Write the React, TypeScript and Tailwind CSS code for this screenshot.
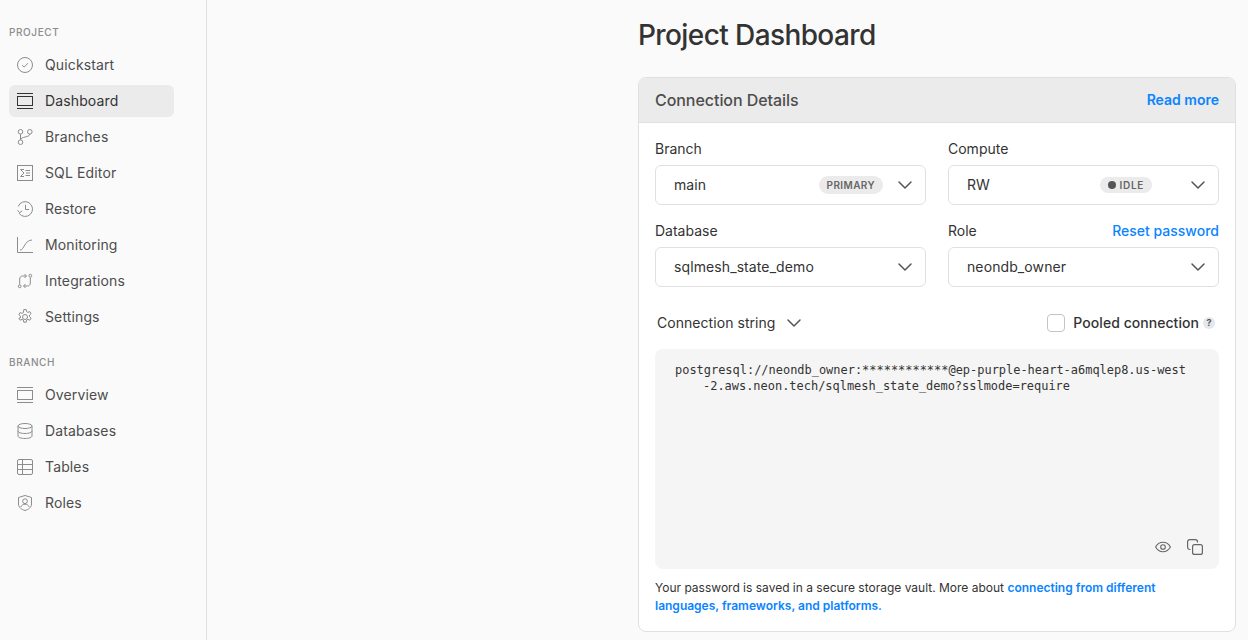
import type { ReactNode } from "react";
import { ChevronDown } from "lucide-react";

const ICON = "h-4 w-4";

function Svg({ children, className = "text-[#8c8c8c]" }: { children: ReactNode; className?: string }) {
  return (
    <svg viewBox="0 0 16 16" fill="none" stroke="currentColor" strokeWidth="1" className={`${ICON} ${className}`}>
      {children}
    </svg>
  );
}

const QuickstartIcon = () => (
  <Svg>
    <circle cx="8" cy="8" r="7.5" />
    <path d="M5.2 8.2 7.2 10.1 10.9 6.2" />
  </Svg>
);
const PanelIcon = ({ dark }: { dark?: boolean }) => (
  <Svg className={dark ? "text-[#333333]" : "text-[#8c8c8c]"}>
    <path d="M0 0.5h16M0 15.5h16" />
    <rect x="0.5" y="3.5" width="15" height="9" />
  </Svg>
);
const BranchIcon = () => (
  <Svg>
    <circle cx="3.5" cy="2.8" r="2.3" />
    <circle cx="12.8" cy="2.8" r="2.3" />
    <circle cx="3.5" cy="13.2" r="2.3" />
    <path d="M3.500 5.100v5.800M12.800 5.100c0 3.400-9.300 2.400-9.300 5.800" />
  </Svg>
);
const SqlIcon = () => (
  <Svg>
    <rect x="0.5" y="0.5" width="15" height="15" />
    <path d="M3.500 4.500 7 8l-3.500 3.500M3.500 4.500H7M3.500 11.500H7M8.500 5.500h4.500M9 8h4M8.500 10.500h4.500" />
  </Svg>
);
const RestoreIcon = () => (
  <Svg>
    <path d="M1.200 5.500A7.400 7.400 0 1 1 2 12.200" />
    <path d="M8.500 3.800V8.500h3.600" />
    <path d="M0.500 9.200 2.600 11.700 5.200 9.900" />
  </Svg>
);
const MonitoringIcon = () => (
  <Svg>
    <path d="M0.500 0v15.500H16" />
    <path d="M3 13c4.500 0 4-9.500 12-10" />
  </Svg>
);
const IntegrationsIcon = () => (
  <Svg>
    <circle cx="2.700" cy="13.300" r="1.400" />
    <circle cx="13.300" cy="2.700" r="1.400" />
    <path d="M2.700 11.500V6c0-2 1-3 3-3h3.500M7.500 1 9.500 3 7.500 5" />
    <path d="M13.300 4.500V10c0 2-1 3-3 3H6.800M8.500 11l-2 2 2 2" />
  </Svg>
);
const SettingsIcon = () => (
  <Svg>
    <circle cx="8" cy="8" r="2.500" />
    <path d="M6.800 0.600h2.400l.4 2.100 1.300.7 2-.8 1.200 2.100-1.600 1.400v1.600l1.600 1.400-1.200 2.100-2-.8-1.300.7-.4 2.100H6.800l-.4-2.100-1.300-.7-2 .8-1.200-2.100L3.500 8.700V7.100L1.900 5.700l1.200-2.100 2 .8 1.300-.7z" />
  </Svg>
);
const DatabaseIcon = () => (
  <Svg>
    <ellipse cx="8" cy="3" rx="7" ry="2.500" />
    <path d="M1 3v10c0 1.400 3.100 2.500 7 2.500s7-1.100 7-2.500V3M1 8c0 1.400 3.100 2.500 7 2.500S15 9.400 15 8" />
  </Svg>
);
const TablesIcon = () => (
  <Svg>
    <rect x="0.500" y="0.500" width="15" height="15" rx="1.500" />
    <path d="M0.500 5.500h15M0.500 10.500h15M5.500 0.500v15" />
  </Svg>
);
const RolesIcon = () => (
  <Svg>
    <path d="M8 0.500 14.500 2.500V9c0 3.500-3 5.500-6.500 6.500C4.500 14.500 1.500 12.500 1.500 9V2.500z" />
    <circle cx="8" cy="6.200" r="2.400" />
    <path d="M3.800 12c.8-2 2.400-2.800 4.200-2.800s3.400.8 4.200 2.800" />
  </Svg>
);

const PROJECT_ITEMS = [
  { label: "Quickstart", icon: <QuickstartIcon /> },
  { label: "Dashboard", icon: <PanelIcon dark />, active: true },
  { label: "Branches", icon: <BranchIcon /> },
  { label: "SQL Editor", icon: <SqlIcon /> },
  { label: "Restore", icon: <RestoreIcon /> },
  { label: "Monitoring", icon: <MonitoringIcon /> },
  { label: "Integrations", icon: <IntegrationsIcon /> },
  { label: "Settings", icon: <SettingsIcon /> },
];

const BRANCH_ITEMS = [
  { label: "Overview", icon: <PanelIcon /> },
  { label: "Databases", icon: <DatabaseIcon /> },
  { label: "Tables", icon: <TablesIcon /> },
  { label: "Roles", icon: <RolesIcon /> },
];

function NavItem({ label, icon, active }: { label: string; icon: ReactNode; active?: boolean }) {
  return (
    <div
      className={`flex h-8 items-center gap-3 rounded-[6px] pl-2 text-sm font-normal tracking-[0.13px] ${
        active ? "bg-[#ebebeb] text-[#333333]" : "text-[#4d4d4d]"
      }`}
    >
      {icon}
      <span>{label}</span>
    </div>
  );
}

function Sidebar() {
  return (
    <aside className="flex h-[640px] w-[207px] shrink-0 flex-col border-r border-[#e0e0e0] pl-[9px] pr-8">
      <p className="mt-[26px] h-3 text-[10px] leading-3 font-medium tracking-[0.6px] text-[#8c8c8c]">PROJECT</p>
      <nav className="mt-[11px] flex flex-col gap-1">
        {PROJECT_ITEMS.map((item) => (
          <NavItem key={item.label} {...item} />
        ))}
      </nav>
      <p className="mt-[23px] h-3 text-[10px] leading-3 font-medium tracking-[0.6px] text-[#8c8c8c]">BRANCH</p>
      <nav className="mt-[11px] flex flex-col gap-1">
        {BRANCH_ITEMS.map((item) => (
          <NavItem key={item.label} {...item} />
        ))}
      </nav>
    </aside>
  );
}

function Select({ value, badge }: { value: string; badge?: ReactNode }) {
  return (
    <div className="mt-[7px] flex h-10 items-center rounded-[6px] border border-[#e0e0e0] bg-white pl-[18px] pr-2 text-sm text-[#333333]">
      <span className="flex-1 tracking-[0.1px]">{value}</span>
      {badge}
      <ChevronDown size={24} strokeWidth={1.5} className="ml-[10px] text-[#555555]" />
    </div>
  );
}

function Field({
  label,
  value,
  badge,
  action,
}: {
  label: string;
  value: string;
  badge?: ReactNode;
  action?: string;
}) {
  return (
    <div>
      <div className="flex h-[18px] items-center justify-between text-sm leading-[18px]">
        <span className="text-[#333333]">{label}</span>
        {action && <span className="font-medium text-[#0a84ff]">{action}</span>}
      </div>
      <Select value={value} badge={badge} />
    </div>
  );
}

function ConnectionCard() {
  return (
    <section className="h-[555px] w-[598px] overflow-hidden rounded-[8px] border border-[#e0e0e0] bg-white">
      <header className="flex h-[45px] items-center justify-between border-b border-[#e0e0e0] bg-[#ebebeb] px-4">
        <h2 className="text-base font-medium tracking-[-0.05px] text-[#4d4d4d]">Connection Details</h2>
        <a className="text-sm font-semibold text-[#0a84ff]">Read more</a>
      </header>
      <div className="px-4 pt-[17px]">
        <div className="grid grid-cols-2 gap-x-[22px] gap-y-[17px]">
          <Field
            label="Branch"
            value="main"
            badge={
              <span className="rounded-full bg-[#ebebeb] px-2 text-[10px] leading-[18px] font-semibold tracking-[0.4px] text-[#666666]">
                PRIMARY
              </span>
            }
          />
          <Field
            label="Compute"
            value="RW"
            badge={
              <span className="mr-6 flex h-4 items-center gap-1 rounded-full bg-[#ebebeb] px-2 text-[10px] font-semibold tracking-[0.7px] text-[#666666]">
                <span className="h-2 w-2 rounded-full bg-[#555555]" />
                IDLE
              </span>
            }
          />
          <Field label="Database" value="sqlmesh_state_demo" />
          <Field label="Role" value="neondb_owner" action="Reset password" />
        </div>
        <div className="mt-[16px] flex h-[40px] items-center justify-between">
          <div className="flex items-center gap-[7px] pl-[2px] text-sm tracking-[0.05px] text-[#333333]">
            <span>Connection string</span>
            <ChevronDown size={24} strokeWidth={1.5} className="text-[#555555]" />
          </div>
          <div className="flex items-center">
            <span className="h-[18px] w-[18px] rounded-[4px] border border-[#c4c4c4] bg-white" />
            <span className="ml-2 text-sm font-medium tracking-[0.05px] text-[#333333]">Pooled connection</span>
            <span className="mr-1 ml-1 flex h-3 w-3 items-center justify-center rounded-full bg-[#e4e7ed] text-[9px] font-bold text-[#555555]">
              ?
            </span>
          </div>
        </div>
        <div className="mt-[6px] flex h-[220px] flex-col justify-between rounded-[8px] bg-[#f5f5f5] px-5 pt-[13px] pb-[14px]">
          <p
            className="pl-[28px] -indent-[28px] text-[11.96px] leading-[16px] text-[#333333]"
            style={{ fontFamily: '"DejaVu Sans Mono", monospace' }}
          >
            postgresql://neondb_owner:************@ep-purple-heart-a6mqlep8.us-west
            <wbr />
            -2.aws.neon.tech/sqlmesh_state_demo?sslmode=require
          </p>
          <div className="-mr-1 flex justify-end gap-[16px]">
            <svg viewBox="0 0 16 16" fill="none" stroke="currentColor" strokeWidth="1.100" className="h-4 w-4 text-[#666666]">
              <path d="M0.600 8C2.300 4.900 4.900 3.300 8 3.300s5.700 1.600 7.400 4.700c-1.700 3.100-4.300 4.700-7.400 4.700S2.300 11.100 0.600 8z" />
              <circle cx="8" cy="8" r="2.300" />
            </svg>
            <svg viewBox="0 0 16 16" fill="none" stroke="currentColor" strokeWidth="1.200" className="h-4 w-4 text-[#666666]">
              <rect x="5.600" y="5.600" width="9.800" height="9.800" rx="2" />
              <path d="M3.500 10.500h-.7A2.200 2.200 0 0 1 0.600 8.300V2.800A2.200 2.200 0 0 1 2.800 0.600h5.500a2.200 2.200 0 0 1 2.200 2.200v.7" />
            </svg>
          </div>
        </div>
        <p className="mt-[10px] text-xs leading-[18px] text-[#333333]">
          Your password is saved in a secure storage vault. More about{" "}
          <a className="font-semibold text-[#0a84ff]">connecting from different languages, frameworks, and platforms.</a>
        </p>
      </div>
    </section>
  );
}

export default function App() {
  return (
    <div
      className="flex h-[640px] w-[1248px] overflow-hidden bg-[#fafafa]"
      style={{ fontFamily: "Inter, sans-serif" }}
    >
      <Sidebar />
      <main className="flex flex-1 flex-col items-end pr-3">
        <div className="w-[598px]">
          <h1 className="mt-[17px] h-[36px] text-[28px] leading-[36px] font-[550] tracking-[-0.6px] text-[#333333]">
            Project Dashboard
          </h1>
          <div className="mt-[24px]">
            <ConnectionCard />
          </div>
        </div>
      </main>
    </div>
  );
}
